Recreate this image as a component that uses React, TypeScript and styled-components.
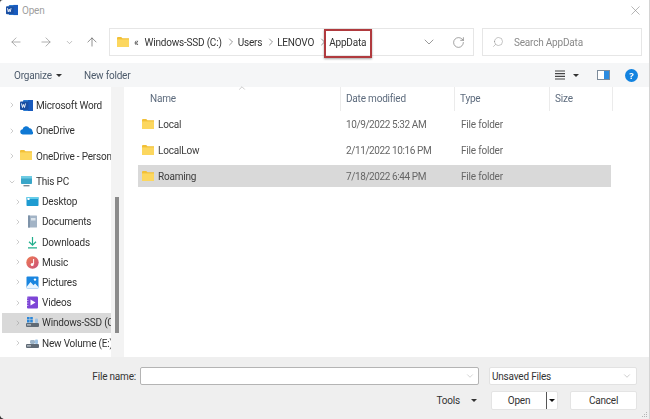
import React from "react";
import styled, { createGlobalStyle } from "styled-components";
import {
  ArrowLeft,
  ArrowRight,
  ArrowUp,
  ChevronDown,
  ChevronRight,
  ChevronUp,
  RotateCw,
  Search,
  X,
} from "lucide-react";

const GlobalStyle = createGlobalStyle`
  html, body {
    margin: 0;
    padding: 0;
    background: #3a3a3a;
  }
  body {
    font-family: Roboto, "Noto Sans", sans-serif;
    font-size: 10px;
    letter-spacing: -0.2px;
    color: #3c3c3c;
  }
`;

const Dialog = styled.div`
  width: 650px;
  height: 419px;
  box-sizing: border-box;
  border-right: 1px solid #d4d4d4;
  display: flex;
  flex-direction: column;
  background: #ffffff;
  border-radius: 3px 0 0 5px;
  overflow: hidden;
  filter: blur(0.35px);
`;

const TitleBar = styled.div`
  height: 20px;
  display: flex;
  align-items: center;
  padding: 0 6px 1px 6px;
  gap: 4px;
  color: #a0a0a0;
`;

const TitleText = styled.span`
  flex: 1;
`;

const AddressRow = styled.div`
  height: 28px;
  margin-top: 7px;
  display: flex;
  align-items: center;
`;

const NavButton = styled.div<{ $w: number; $dim?: boolean }>`
  width: ${(p) => p.$w}px;
  display: flex;
  justify-content: center;
  color: ${(p) => (p.$dim ? "#858585" : "#555")};
`;

const AddressBox = styled.div`
  width: 365px;
  height: 28px;
  margin-left: 3px;
  box-sizing: border-box;
  border: 1px solid #e6e6e6;
  display: flex;
  align-items: center;
  padding: 0 8px 0 7px;
  color: #333;
`;

const Crumb = styled.span<{ $m: number }>`
  margin-left: ${(p) => p.$m}px;
  position: relative;
  white-space: nowrap;
`;

const Highlight = styled.span`
  position: absolute;
  left: -5px;
  top: -8px;
  width: 44px;
  height: 25px;
  border: 2px solid #b03a3e;
  box-shadow: 0 1px 2px rgba(0, 0, 0, 0.35);
`;

const CrumbSep = styled(ChevronRight)`
  margin-left: 3px;
  color: #555;
  flex: none;
`;

const AddressTail = styled.div`
  margin-left: auto;
  display: flex;
  align-items: center;
  gap: 15px;
  color: #666;
`;

const SearchBox = styled.div`
  width: 160px;
  height: 28px;
  margin-left: 8px;
  box-sizing: border-box;
  border: 1px solid #e6e6e6;
  display: flex;
  align-items: center;
  gap: 10px;
  padding-left: 9px;
  color: #8a8a8a;
`;

const SearchGlass = styled(Search)`
  transform: scaleX(-1);
`;

const Toolbar = styled.div`
  height: 24px;
  margin-top: 7px;
  background: #f5f6f7;
  display: flex;
  align-items: center;
  padding: 0 11px 0 14px;
  color: #4d5b6b;
`;

const ToolLabel = styled.span<{ $w?: number }>`
  width: ${(p) => (p.$w ? `${p.$w}px` : "auto")};
  display: flex;
  align-items: center;
  gap: 4px;
`;

const Caret = styled.span<{ $color?: string }>`
  width: 0;
  height: 0;
  border-left: 3px solid transparent;
  border-right: 3px solid transparent;
  border-top: 3px solid ${(p) => p.$color || "#333"};
`;

const ViewCaret = styled(Caret)`
  margin: 0 18px 0 8px;
`;

const ToolIcons = styled.div`
  margin-left: auto;
  display: flex;
  align-items: center;
  gap: 0;
`;

const HelpSlot = styled.span`
  margin-left: 15px;
  display: flex;
`;

const Body = styled.div`
  height: 270px;
  display: flex;
`;

const Sidebar = styled.div`
  width: 111px;
  padding-top: 8px;
  box-sizing: border-box;
  overflow: hidden;
  flex: none;
`;

const TreeRow = styled.div<{ $gap: number; $child?: boolean; $selected?: boolean }>`
  height: 20.2px;
  margin: 0 0 ${(p) => p.$gap}px 2px;
  padding-left: ${(p) => (p.$child ? 12 : 6)}px;
  display: flex;
  align-items: center;
  gap: 3px;
  white-space: nowrap;
  overflow: hidden;
  color: #333;
  background: ${(p) => (p.$selected ? "#d9d9d9" : "transparent")};
`;

const TreeChevron = styled.span`
  width: 8px;
  display: flex;
  justify-content: center;
  flex: none;
  color: #8a8a8a;
`;

const TreeIcon = styled.span`
  width: 13px;
  height: 13px;
  margin-left: 1px;
  display: flex;
  flex: none;
`;

const Gutter = styled.div`
  width: 13px;
  background: #f3f3f3;
  padding: 110px 0 24px 4px;
  box-sizing: border-box;
  flex: none;
`;

const Thumb = styled.div`
  width: 4px;
  height: 136px;
  background: #8b8b8b;
`;

const Main = styled.div`
  flex: 1;
  position: relative;
`;

const HeaderRow = styled.div`
  height: 24px;
  display: grid;
  grid-template-columns: 217px 114px 95px 63px;
  color: #5d6b7d;
`;

const HeaderCell = styled.div<{ $first?: boolean }>`
  padding: 0 0 1px ${(p) => (p.$first ? "26px" : "5px")};
  display: flex;
  align-items: center;
  border-right: 1px solid #ebebeb;
  position: relative;
`;

const SortMark = styled(ChevronUp)`
  position: absolute;
  left: 113px;
  top: -4px;
  color: #999;
`;

const FileList = styled.div`
  margin: 2px 0 0 14px;
  width: 473px;
  display: flex;
  flex-direction: column;
  gap: 4px;
`;

const FileRow = styled.div<{ $selected?: boolean }>`
  height: 22px;
  display: grid;
  grid-template-columns: 208px 115px 1fr;
  align-items: center;
  color: #666;
  background: ${(p) => (p.$selected ? "#d9d9d9" : "transparent")};
`;

const FileName = styled.div`
  display: flex;
  align-items: center;
  gap: 4px;
  padding-left: 4px;
  color: #3c3c3c;
`;

const FileDate = styled.span`
  letter-spacing: -0.4px;
`;

const Footer = styled.div`
  flex: 1;
  background: #efefef;
  display: flex;
  flex-direction: column;
  align-items: flex-end;
  padding: 10px 12px 0 0;
  position: relative;
`;

const FooterRow = styled.div`
  display: flex;
  align-items: center;
`;

const FileLabel = styled.span`
  margin-right: 4px;
  color: #333;
`;

const FileInput = styled.div`
  width: 339px;
  height: 18px;
  box-sizing: border-box;
  background: #fff;
  border: 1px solid #b4b4b4;
  border-radius: 2px;
  display: flex;
  align-items: center;
  justify-content: flex-end;
  padding-right: 3px;
  color: #999;
`;

const TypeSelect = styled.div`
  width: 148px;
  height: 18px;
  margin-left: 10px;
  box-sizing: border-box;
  background: #fff;
  border: 1px solid #e2e2e2;
  border-radius: 2px;
  display: flex;
  align-items: center;
  justify-content: space-between;
  padding: 0 4px 0 2px;
  color: #333;
`;

const ActionRow = styled(FooterRow)`
  margin-top: 6px;
`;

const ToolsLabel = styled.span`
  display: flex;
  align-items: center;
  gap: 11px;
  margin-right: 14px;
  color: #333;
`;

const DialogButton = styled.div<{ $split?: boolean }>`
  width: 67px;
  height: 19px;
  box-sizing: border-box;
  background: #fff;
  border: 1px solid #e4e4e4;
  border-radius: 2px;
  margin-left: ${(p) => (p.$split ? 0 : 12)}px;
  display: flex;
  align-items: center;
  justify-content: center;
  position: relative;
  color: #333;
`;

const OpenLabel = styled.span`
  margin-right: 11px;
`;

const SplitPart = styled.span`
  position: absolute;
  right: 0;
  top: 0;
  bottom: 0;
  width: 10px;
  border-left: 1px solid #555;
  display: flex;
  align-items: center;
  justify-content: center;
`;

const Grip = styled.svg`
  position: absolute;
  right: 1px;
  bottom: 1px;
`;

const WordIcon = ({ size = 13 }: { size?: number }) => (
  <svg width={size} height={size} viewBox="0 0 13 13">
    <rect x="3" y="1" width="10" height="11" rx="1" fill="#2b7cd3" />
    <rect x="8" y="1" width="5" height="11" fill="#185abd" />
    <rect x="0" y="2.5" width="8.5" height="8.5" rx="1" fill="#1a4fa3" />
    <path d="M1.5 4.5l1 4 1-3 1 3 1-4" fill="none" stroke="#fff" strokeWidth="0.9" />
  </svg>
);

const FolderIcon = ({ w = 12, h = 10 }: { w?: number; h?: number }) => (
  <svg width={w} height={h} viewBox="0 0 12 10">
    <path d="M0 1a1 1 0 0 1 1-1h3.2l1.3 1.3H12V10H0z" fill="#f2c037" />
    <rect x="0" y="2.4" width="12" height="7.6" fill="#fcd75f" />
  </svg>
);

const CloudIcon = () => (
  <svg width="13" height="13" viewBox="0 0 13 13">
    <path d="M3 10.5a2.6 2.6 0 0 1-.4-5.2 3.6 3.6 0 0 1 6.8-1 2.9 2.9 0 0 1 3 3.2 1.6 1.6 0 0 1-.7 3z" fill="#0f78d4" />
  </svg>
);

const PcIcon = () => (
  <svg width="13" height="13" viewBox="0 0 13 13">
    <rect x="1" y="1" width="11" height="8" rx="0.8" fill="#39a6c9" />
    <rect x="1" y="1" width="11" height="2.5" fill="#6fcbe3" />
    <rect x="3.5" y="10" width="6" height="1.4" fill="#7d8a94" />
  </svg>
);

const DesktopIcon = () => (
  <svg width="13" height="13" viewBox="0 0 13 13">
    <rect x="0.5" y="2" width="12" height="9" rx="0.8" fill="#1e9bd1" />
    <rect x="0.5" y="2" width="12" height="2" fill="#66cdea" />
    <rect x="1.5" y="3" width="2" height="2" fill="#fff" />
  </svg>
);

const DocsIcon = () => (
  <svg width="13" height="13" viewBox="0 0 13 13">
    <rect x="2" y="0.5" width="9" height="12" rx="0.6" fill="#a3b4c6" />
    <rect x="2" y="0.5" width="2" height="12" fill="#7e93a9" />
    <rect x="5" y="3" width="4.5" height="2.5" fill="#dbe4ec" />
  </svg>
);

const DownloadIcon = () => (
  <svg width="13" height="13" viewBox="0 0 13 13" fill="none" stroke="#1fae8b" strokeWidth="1.2">
    <path d="M6.5 1v8M3 5.8l3.5 3.4L10 5.8M2 11.8h9" />
  </svg>
);

const MusicIcon = () => (
  <svg width="13" height="13" viewBox="0 0 13 13">
    <defs>
      <linearGradient id="mus" x1="0" y1="0" x2="1" y2="1">
        <stop offset="0" stopColor="#ef7d52" />
        <stop offset="1" stopColor="#c94f7c" />
      </linearGradient>
    </defs>
    <circle cx="6.5" cy="6.5" r="6.2" fill="url(#mus)" />
    <path d="M7.6 3v5" stroke="#fff" strokeWidth="1" />
    <circle cx="6.2" cy="8.4" r="1.5" fill="#fff" />
  </svg>
);

const PicturesIcon = () => (
  <svg width="13" height="13" viewBox="0 0 13 13">
    <rect x="0.5" y="0.5" width="12" height="12" rx="1" fill="#1a86e0" />
    <path d="M0.5 11l4-5 3 3.2 1.6-1.6 3.4 3.6v1.3H0.5z" fill="#e8f4ff" />
    <circle cx="9" cy="3.6" r="1.2" fill="#fff" />
  </svg>
);

const VideosIcon = () => (
  <svg width="13" height="13" viewBox="0 0 13 13">
    <rect x="1" y="0.5" width="11" height="12" rx="1" fill="#7d45d6" />
    <path d="M4.5 3.5l5 3-5 3z" fill="#fff" />
    <path d="M1 2h1.4M1 4.5h1.4M1 7h1.4M1 9.5h1.4" stroke="#d7c3f6" strokeWidth="0.8" />
  </svg>
);

const DriveIcon = ({ win }: { win?: boolean }) => (
  <svg width="13" height="13" viewBox="0 0 13 13">
    <rect x="0" y="7" width="13" height="4" rx="1" fill="#5f6a75" />
    <rect x="1" y="8.4" width="4" height="1" fill="#d7dde3" />
    {win ? (
      <path d="M1 1h2.6v2.4H1zM4.2 1h2.6v2.4H4.2zM1 4h2.6v2.4H1zM4.2 4h2.6v2.4H4.2z" fill="#2a86d8" />
    ) : (
      <rect x="4" y="3" width="5" height="4" rx="1.4" fill="#9db4c8" />
    )}
    <rect x="9" y="2.5" width="3" height="4.5" rx="1" fill="#9fc3e4" />
  </svg>
);

const ListViewIcon = () => (
  <svg width="10" height="10" viewBox="0 0 10 10" stroke="#444" strokeWidth="1.2">
    <path d="M0 1h10M0 3.7h10M0 6.3h10M0 9h10" />
  </svg>
);

const PaneIcon = () => (
  <svg width="13" height="10" viewBox="0 0 13 10">
    <rect x="0.5" y="0.5" width="12" height="9" fill="#fff" stroke="#7d8c9b" />
    <rect x="7" y="1" width="5" height="8" fill="#2b8be0" />
  </svg>
);

const HelpIcon = () => (
  <svg width="13" height="13" viewBox="0 0 13 13">
    <circle cx="6.5" cy="6.5" r="6.5" fill="#1283e0" />
    <text x="6.5" y="10" textAnchor="middle" fontSize="9.5" fontWeight="700" fill="#fff" fontFamily="Noto Sans, sans-serif">?</text>
  </svg>
);

const tree = [
  { label: "Microsoft Word", icon: <WordIcon />, gap: 5.3 },
  { label: "OneDrive", icon: <CloudIcon />, gap: 5.3 },
  { label: "OneDrive - Personal", icon: <FolderIcon w={12} h={10} />, gap: 5.3 },
  { label: "This PC", icon: <PcIcon />, gap: 0, open: true },
  { label: "Desktop", icon: <DesktopIcon />, gap: 0, child: true },
  { label: "Documents", icon: <DocsIcon />, gap: 0, child: true },
  { label: "Downloads", icon: <DownloadIcon />, gap: 0, child: true },
  { label: "Music", icon: <MusicIcon />, gap: 0, child: true },
  { label: "Pictures", icon: <PicturesIcon />, gap: 0, child: true },
  { label: "Videos", icon: <VideosIcon />, gap: 0, child: true },
  { label: "Windows-SSD (C:)", icon: <DriveIcon win />, gap: 0, child: true, selected: true },
  { label: "New Volume (E:)", icon: <DriveIcon />, gap: 0, child: true },
];

const files = [
  { name: "Local", date: "10/9/2022 5:32 AM" },
  { name: "LocalLow", date: "2/11/2022 10:16 PM" },
  { name: "Roaming", date: "7/18/2022 6:44 PM", selected: true },
];

export default function App() {
  return (
    <>
      <GlobalStyle />
      <Dialog>
        <TitleBar>
          <WordIcon size={12} />
          <TitleText>Open</TitleText>
          <X size={15} strokeWidth={1} color="#8a8a8a" />
        </TitleBar>

        <AddressRow>
          <NavButton $w={32} $dim><ArrowLeft size={14} strokeWidth={1.1} /></NavButton>
          <NavButton $w={28} $dim><ArrowRight size={14} strokeWidth={1.1} /></NavButton>
          <NavButton $w={18} $dim><ChevronDown size={9} strokeWidth={1.4} /></NavButton>
          <NavButton $w={28}><ArrowUp size={14} strokeWidth={1.1} /></NavButton>
          <AddressBox>
            <FolderIcon />
            <Crumb $m={5}>«</Crumb>
            <Crumb $m={6}>Windows-SSD (C:)</Crumb>
            <CrumbSep size={12} strokeWidth={1.2} />
            <Crumb $m={1}>Users</Crumb>
            <CrumbSep size={12} strokeWidth={1.2} />
            <Crumb $m={0}>LENOVO</Crumb>
            <CrumbSep size={12} strokeWidth={1.2} />
            <Crumb $m={0}>
              AppData
              <Highlight />
            </Crumb>
            <AddressTail>
              <ChevronDown size={16} strokeWidth={1} />
              <RotateCw size={13} strokeWidth={1.1} />
            </AddressTail>
          </AddressBox>
          <SearchBox>
            <SearchGlass size={12} strokeWidth={1} />
            Search AppData
          </SearchBox>
        </AddressRow>

        <Toolbar>
          <ToolLabel $w={70}>Organize <Caret /></ToolLabel>
          <ToolLabel>New folder</ToolLabel>
          <ToolIcons>
            <ListViewIcon />
            <ViewCaret />
            <PaneIcon />
            <HelpSlot><HelpIcon /></HelpSlot>
          </ToolIcons>
        </Toolbar>

        <Body>
          <Sidebar>
            {tree.map((t) => (
              <TreeRow key={t.label} $gap={t.gap} $child={t.child} $selected={t.selected}>
                <TreeChevron>
                  {t.open ? <ChevronDown size={12} strokeWidth={1.3} /> : <ChevronRight size={12} strokeWidth={1.3} />}
                </TreeChevron>
                <TreeIcon>{t.icon}</TreeIcon>
                {t.label}
              </TreeRow>
            ))}
          </Sidebar>
          <Gutter><Thumb /></Gutter>
          <Main>
            <HeaderRow>
              <HeaderCell $first>
                Name
                <SortMark size={10} strokeWidth={1.2} />
              </HeaderCell>
              <HeaderCell>Date modified</HeaderCell>
              <HeaderCell>Type</HeaderCell>
              <HeaderCell>Size</HeaderCell>
            </HeaderRow>
            <FileList>
              {files.map((f) => (
                <FileRow key={f.name} $selected={f.selected}>
                  <FileName>
                    <FolderIcon />
                    {f.name}
                  </FileName>
                  <FileDate>{f.date}</FileDate>
                  <span>File folder</span>
                </FileRow>
              ))}
            </FileList>
          </Main>
        </Body>

        <Footer>
          <FooterRow>
            <FileLabel>File name:</FileLabel>
            <FileInput><ChevronDown size={10} strokeWidth={1} /></FileInput>
            <TypeSelect>
              Unsaved Files
              <ChevronDown size={10} strokeWidth={1} color="#888" />
            </TypeSelect>
          </FooterRow>
          <ActionRow>
            <ToolsLabel>Tools <Caret /></ToolsLabel>
            <DialogButton $split>
              <OpenLabel>Open</OpenLabel>
              <SplitPart><Caret $color="#111" /></SplitPart>
            </DialogButton>
            <DialogButton>Cancel</DialogButton>
          </ActionRow>
          <Grip width="7" height="7" viewBox="0 0 7 7" fill="#b5b5b5">
            <rect x="5" y="1" width="1" height="1" />
            <rect x="3" y="3" width="1" height="1" />
            <rect x="5" y="3" width="1" height="1" />
            <rect x="1" y="5" width="1" height="1" />
            <rect x="3" y="5" width="1" height="1" />
            <rect x="5" y="5" width="1" height="1" />
          </Grip>
        </Footer>
      </Dialog>
    </>
  );
}
